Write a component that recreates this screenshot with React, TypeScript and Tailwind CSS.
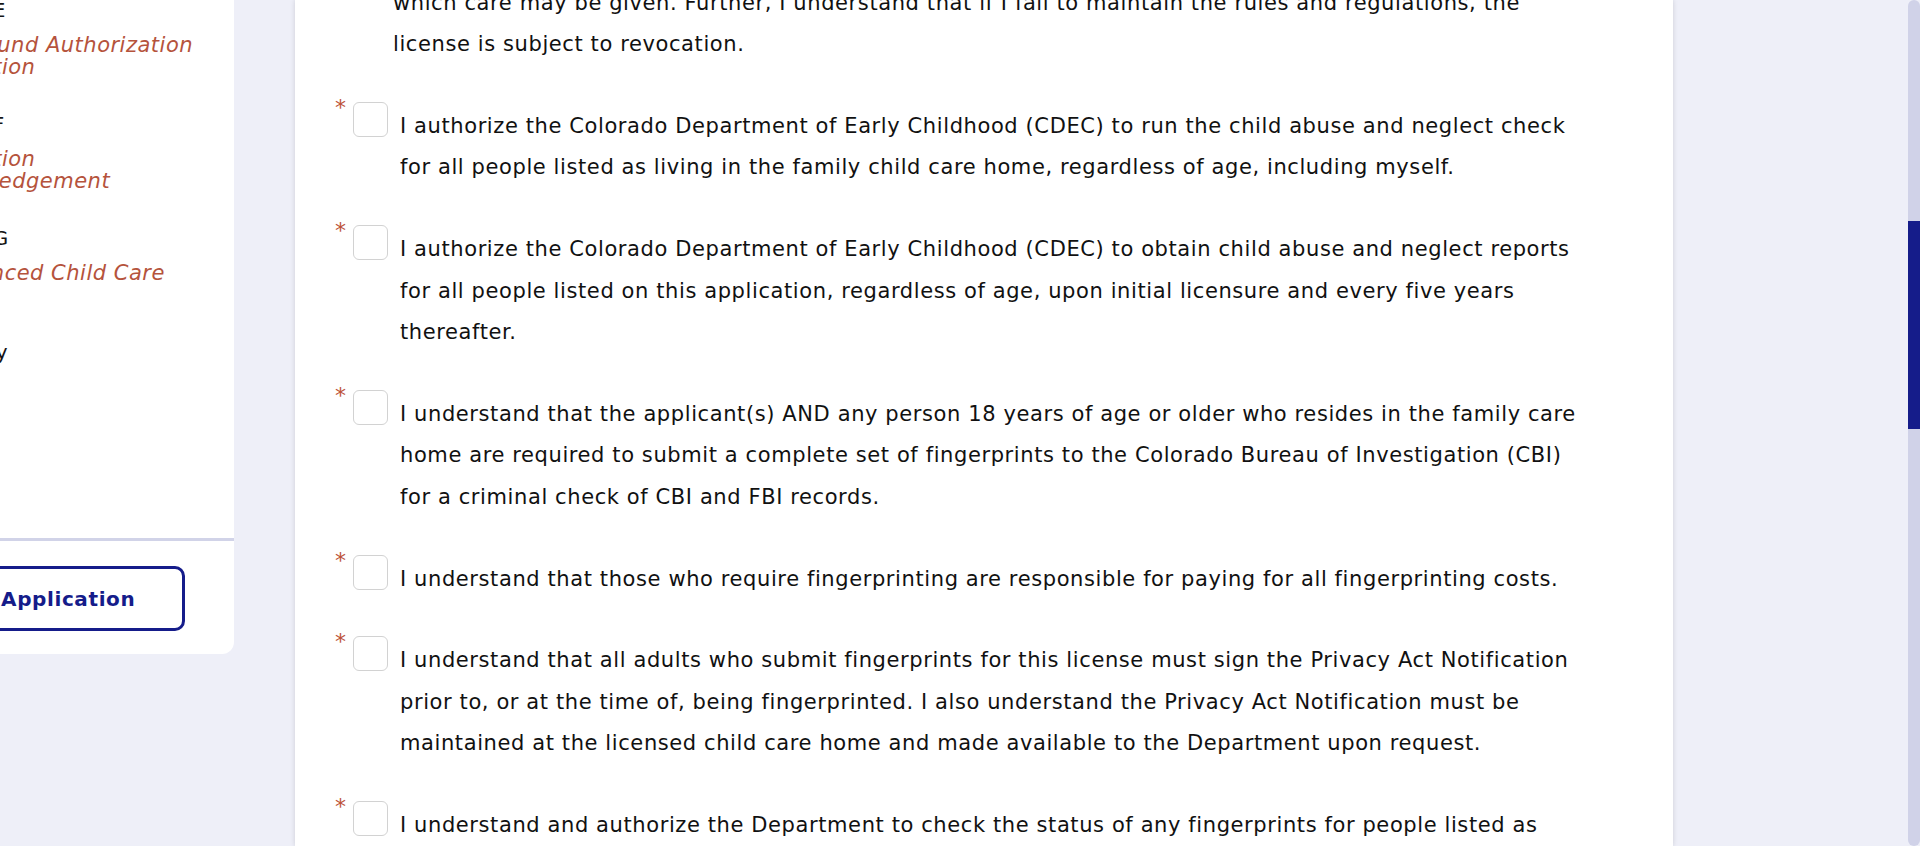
import React from 'react';

type Statement = { lines: string[] };

const statements: Statement[] = [
  {
    lines: [
      'I understand that I must comply with the rules and regulations for family child care homes, including the number and ages of children for',
      'which care may be given. Further, I understand that if I fail to maintain the rules and regulations, the',
      'license is subject to revocation.',
    ],
  },
  {
    lines: [
      'I authorize the Colorado Department of Early Childhood (CDEC) to run the child abuse and neglect check',
      'for all people listed as living in the family child care home, regardless of age, including myself.',
    ],
  },
  {
    lines: [
      'I authorize the Colorado Department of Early Childhood (CDEC) to obtain child abuse and neglect reports',
      'for all people listed on this application, regardless of age, upon initial licensure and every five years',
      'thereafter.',
    ],
  },
  {
    lines: [
      'I understand that the applicant(s) AND any person 18 years of age or older who resides in the family care',
      'home are required to submit a complete set of fingerprints to the Colorado Bureau of Investigation (CBI)',
      'for a criminal check of CBI and FBI records.',
    ],
  },
  {
    lines: [
      'I understand that those who require fingerprinting are responsible for paying for all fingerprinting costs.',
    ],
  },
  {
    lines: [
      'I understand that all adults who submit fingerprints for this license must sign the Privacy Act Notification',
      'prior to, or at the time of, being fingerprinted. I also understand the Privacy Act Notification must be',
      'maintained at the licensed child care home and made available to the Department upon request.',
    ],
  },
  {
    lines: [
      'I understand and authorize the Department to check the status of any fingerprints for people listed as',
      'living in the family child care home.',
    ],
  },
];

const sections = [
  { label: 'Section E', title: ['Background Authorization', 'Information'] },
  { label: 'Section F', title: ['Information', 'Acknowledgement'] },
  { label: 'Section G', title: ['Experienced Child Care', 'Home'] },
  { label: 'Summary', title: [] as string[] },
];

const SideNav: React.FC = () => (
  <aside className="-ml-[150px] flex w-[384px] shrink-0 flex-col self-start rounded-br-xl bg-white">
    <nav className="h-[538px] overflow-hidden pl-[58px]">
      {sections.map((s) => (
        <div key={s.label} className="h-[114px]">
          <div className="whitespace-nowrap text-[20px] leading-[20px] tracking-[0.5px] text-[#141414]">{s.label}</div>
          {s.title.length > 0 && (
            <div className="mt-[14px] text-[21px] italic leading-[22px] tracking-[0.5px] text-[#b5533c]">
              {s.title.map((t) => (
                <span key={t} className="block whitespace-nowrap">
                  {t}
                </span>
              ))}
            </div>
          )}
        </div>
      ))}
    </nav>
    <div className="h-[3px] bg-[#d1d3e8]" />
    <div className="flex justify-end pb-[23px] pr-[49px] pt-[25px]">
      <button className="flex h-[65px] w-[325px] items-center justify-center rounded-[10px] border-[3px] border-[#151c8a] text-[20px] font-bold tracking-[0.6px] text-[#151c8a]">
        Submit Application
      </button>
    </div>
  </aside>
);

const StatementRow: React.FC<Statement> = ({ lines }) => (
  <div className="mb-[36px] flex items-start">
    <span className="-mt-[4px] w-[18px] text-[22px] leading-[20px] text-[#bd5238]">*</span>
    <span className="h-[35px] w-[35px] shrink-0 rounded-[6px] border border-[#d2d2d2] bg-white" />
    <p className="ml-[12px] pt-[4px] text-[21px] leading-[41.6px] tracking-[0.6px] text-[#111111]">
      {lines.map((l) => (
        <span key={l} className="block whitespace-nowrap">
          {l}
        </span>
      ))}
    </p>
  </div>
);

export default function App() {
  return (
    <div className="flex h-[846px] w-[1920px] overflow-hidden bg-[#eeeff8] font-['DejaVu_Sans',sans-serif]">
      <SideNav />
      <main className="ml-[61px] w-[1378px] shrink-0 bg-white shadow-[0_0_5px_rgba(0,0,0,0.14)]">
        <div className="-mt-[63px] pl-[40px]">
          {statements.map((s, i) => (
            <StatementRow key={i} lines={s.lines} />
          ))}
        </div>
      </main>
      <div className="flex-1" />
      <div className="w-[12px] shrink-0 rounded-[6px] bg-[#d0d2e8] pt-[221px]">
        <div className="h-[208px] bg-[#151c8a]" />
      </div>
    </div>
  );
}
